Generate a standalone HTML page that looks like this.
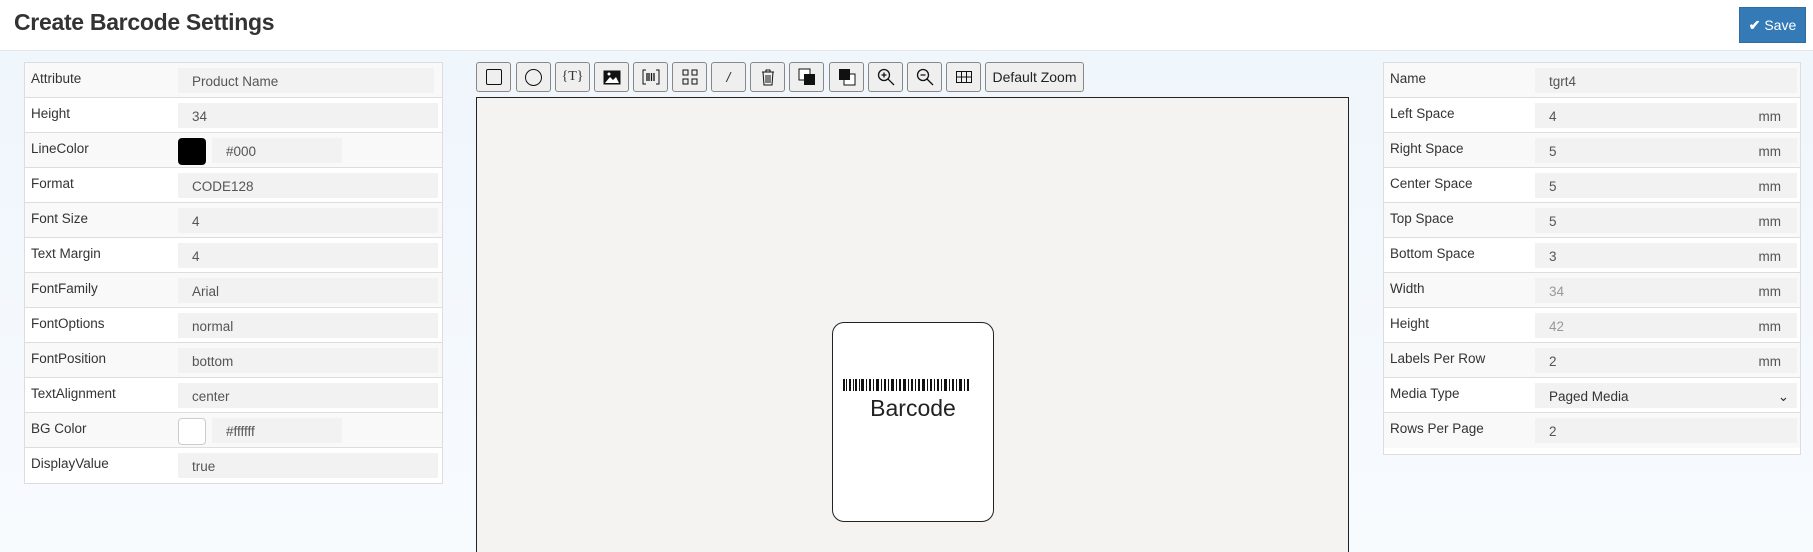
<!DOCTYPE html>
<html><head><meta charset="utf-8"><style>
*{box-sizing:border-box;margin:0;padding:0}
html,body{width:1813px;height:552px;overflow:hidden}
body{font-family:"Liberation Sans",sans-serif;background:linear-gradient(#eef5fc,#f8fbfe);position:relative;color:#333}
.hdr{position:absolute;left:0;top:0;width:1813px;height:51px;background:#fff;border-bottom:1px solid #e3e6ea}
.hdr h1{position:absolute;left:14px;top:9px;font-size:23px;font-weight:bold;color:#333;letter-spacing:-0.3px}
.save{position:absolute;left:1739px;top:7px;width:67px;height:36px;background:#337ab7;border:1px solid #2e6da4;color:#fff;font-size:14px;line-height:34px;text-align:center}
.tbl{position:absolute;background:#fff;border:1px solid #ddd}
.row{height:35px;border-bottom:1px solid #ddd;position:relative;font-size:13.5px;background:#fff}
.row:nth-child(odd){background:#f9f9f9}
.row .l{position:absolute;left:6px;top:8px;color:#333}
.inp{position:absolute;top:5px;height:25px;background:#f2f2f2;color:#555;font-size:13.5px;line-height:27px;padding-left:14px}
.mm{position:absolute;right:16px;top:0}
.sw{position:absolute;top:5px;width:28px;height:27px;border-radius:4px}
.tb{position:absolute;top:62px;height:30px;border:1px solid #888;border-radius:3px;background:#efefef;display:flex;align-items:center;justify-content:center}
.canvas{position:absolute;left:476px;top:97px;width:873px;height:470px;background:#f5f2f2;border:1px solid #222}
.card{position:absolute;left:832px;top:322px;width:162px;height:200px;background:#fff;border:1.5px solid #222;border-radius:12px}
</style></head><body>
<div class="hdr"><h1>Create Barcode Settings</h1></div>
<div class="save"><b>&#10004;</b> Save</div>

<div class="tbl" style="left:24px;top:62px;width:419px">
<div class="row"><span class="l">Attribute</span><div class="inp" style="left:153px;width:256px">Product Name</div></div>
<div class="row"><span class="l">Height</span><div class="inp" style="left:153px;width:260px">34</div></div>
<div class="row"><span class="l">LineColor</span><div class="sw" style="left:153px;background:#000"></div><div class="inp" style="left:187px;width:130px;padding-left:14px">#000</div></div>
<div class="row"><span class="l">Format</span><div class="inp" style="left:153px;width:260px">CODE128</div></div>
<div class="row"><span class="l">Font Size</span><div class="inp" style="left:153px;width:260px">4</div></div>
<div class="row"><span class="l">Text Margin</span><div class="inp" style="left:153px;width:260px">4</div></div>
<div class="row"><span class="l">FontFamily</span><div class="inp" style="left:153px;width:260px">Arial</div></div>
<div class="row"><span class="l">FontOptions</span><div class="inp" style="left:153px;width:260px">normal</div></div>
<div class="row"><span class="l">FontPosition</span><div class="inp" style="left:153px;width:260px">bottom</div></div>
<div class="row"><span class="l">TextAlignment</span><div class="inp" style="left:153px;width:260px">center</div></div>
<div class="row"><span class="l">BG Color</span><div class="sw" style="left:153px;background:#fff;border:1px solid #ccc"></div><div class="inp" style="left:187px;width:130px">#ffffff</div></div>
<div class="row" style="border-bottom:none"><span class="l">DisplayValue</span><div class="inp" style="left:153px;width:260px">true</div></div>
</div>

<div class="tb" style="left:476px;width:35px"><div style="width:16px;height:16px;border:1.5px solid #111;border-radius:2px"></div></div>
<div class="tb" style="left:516px;width:35px"><div style="width:17px;height:17px;border:1.3px solid #111;border-radius:50%"></div></div>
<div class="tb" style="left:555px;width:35px;font-size:14px;font-family:'Liberation Serif',serif">{T}</div>
<div class="tb" style="left:594px;width:35px"><svg width="18" height="15"><rect x="0.5" y="0.5" width="17" height="14" fill="#111"/><path d="M2 13 L7 7 L10 10 L13 7 L16 13Z" fill="#fff"/><circle cx="6" cy="4" r="1.5" fill="#fff"/></svg></div>
<div class="tb" style="left:633px;width:35px"><svg width="18" height="16" fill="none" stroke="#111"><path d="M4 1H1v14h3M14 1h3v14h-3"/><path d="M5 4v8M7 4v8M9.5 4v8M12 4v8" stroke-width="1.3"/></svg></div>
<div class="tb" style="left:672px;width:35px"><svg width="16" height="16" fill="none" stroke="#111"><rect x="1" y="1" width="5" height="5"/><rect x="10" y="1" width="5" height="5"/><rect x="1" y="10" width="5" height="5"/><path d="M10 10h5v5h-5z"/></svg></div>
<div class="tb" style="left:711px;width:35px;font-style:italic;font-size:14px">/</div>
<div class="tb" style="left:750px;width:35px"><svg width="14" height="17" fill="none" stroke="#111"><path d="M1 3h12M5 3V1h4v2M2 3l1 13h8l1-13M5 6v8M7 6v8M9 6v8"/></svg></div>
<div class="tb" style="left:789px;width:35px"><svg width="18" height="18"><rect x="1" y="1" width="11" height="11" fill="#fff" stroke="#111"/><rect x="6" y="6" width="11" height="11" fill="#111"/></svg></div>
<div class="tb" style="left:829px;width:35px"><svg width="18" height="18"><rect x="6" y="6" width="11" height="11" fill="#fff" stroke="#111"/><rect x="1" y="1" width="11" height="11" fill="#111"/></svg></div>
<div class="tb" style="left:868px;width:35px"><svg width="18" height="18" fill="none" stroke="#111" stroke-width="1.3"><circle cx="7" cy="7" r="5.5"/><path d="M11 11l6 6M4.5 7h5M7 4.5v5"/></svg></div>
<div class="tb" style="left:907px;width:35px"><svg width="18" height="18" fill="none" stroke="#111" stroke-width="1.3"><circle cx="7" cy="7" r="5.5"/><path d="M11 11l6 6M4.5 7h5"/></svg></div>
<div class="tb" style="left:946px;width:35px"><svg width="16" height="12" fill="none" stroke="#111"><rect x="0.5" y="0.5" width="15" height="11"/><path d="M5.5 0v12M10.5 0v12M0 6h16"/></svg></div>
<div class="tb" style="left:985px;width:99px;font-size:14px;color:#222">Default Zoom</div>

<div class="canvas"></div>
<div class="card">
<svg style="position:absolute;left:10px;top:56px" width="127" height="12"><g fill="#111">
<rect x="0" width="2" height="12"/><rect x="3" width="1" height="12"/><rect x="6" width="2" height="12"/><rect x="10" width="1" height="12"/><rect x="12" width="2" height="12"/><rect x="16" width="1" height="12"/><rect x="18" width="3" height="12"/><rect x="23" width="1" height="12"/><rect x="26" width="2" height="12"/><rect x="30" width="1" height="12"/><rect x="33" width="3" height="12"/><rect x="38" width="1" height="12"/><rect x="41" width="2" height="12"/><rect x="45" width="1" height="12"/><rect x="48" width="3" height="12"/><rect x="53" width="1" height="12"/><rect x="56" width="2" height="12"/><rect x="60" width="3" height="12"/><rect x="65" width="1" height="12"/><rect x="68" width="2" height="12"/><rect x="72" width="1" height="12"/><rect x="75" width="2" height="12"/><rect x="79" width="3" height="12"/><rect x="84" width="1" height="12"/><rect x="87" width="2" height="12"/><rect x="91" width="1" height="12"/><rect x="94" width="2" height="12"/><rect x="98" width="1" height="12"/><rect x="101" width="3" height="12"/><rect x="106" width="1" height="12"/><rect x="109" width="2" height="12"/><rect x="113" width="1" height="12"/><rect x="116" width="3" height="12"/><rect x="121" width="1" height="12"/><rect x="124" width="2" height="12"/></g></svg>
<div style="position:absolute;left:0;width:100%;top:72px;text-align:center;font-size:23px;color:#222">Barcode</div>
</div>

<div class="tbl" style="left:1383px;top:62px;width:418px;height:393px">
<div class="row"><span class="l">Name</span><div class="inp" style="left:151px;width:262px">tgrt4</div></div>
<div class="row"><span class="l">Left Space</span><div class="inp" style="left:151px;width:262px">4<span class="mm">mm</span></div></div>
<div class="row"><span class="l">Right Space</span><div class="inp" style="left:151px;width:262px">5<span class="mm">mm</span></div></div>
<div class="row"><span class="l">Center Space</span><div class="inp" style="left:151px;width:262px">5<span class="mm">mm</span></div></div>
<div class="row"><span class="l">Top Space</span><div class="inp" style="left:151px;width:262px">5<span class="mm">mm</span></div></div>
<div class="row"><span class="l">Bottom Space</span><div class="inp" style="left:151px;width:262px">3<span class="mm">mm</span></div></div>
<div class="row"><span class="l">Width</span><div class="inp" style="left:151px;width:262px;color:#999">34<span class="mm" style="color:#555">mm</span></div></div>
<div class="row"><span class="l">Height</span><div class="inp" style="left:151px;width:262px;color:#999">42<span class="mm" style="color:#555">mm</span></div></div>
<div class="row"><span class="l">Labels Per Row</span><div class="inp" style="left:151px;width:262px">2<span class="mm">mm</span></div></div>
<div class="row"><span class="l">Media Type</span><div class="inp" style="left:151px;width:262px;color:#333">Paged Media<span class="mm" style="right:8px">&#8964;</span></div></div>
<div class="row" style="border-bottom:none"><span class="l">Rows Per Page</span><div class="inp" style="left:151px;width:262px">2</div></div>
</div>
</body></html>
